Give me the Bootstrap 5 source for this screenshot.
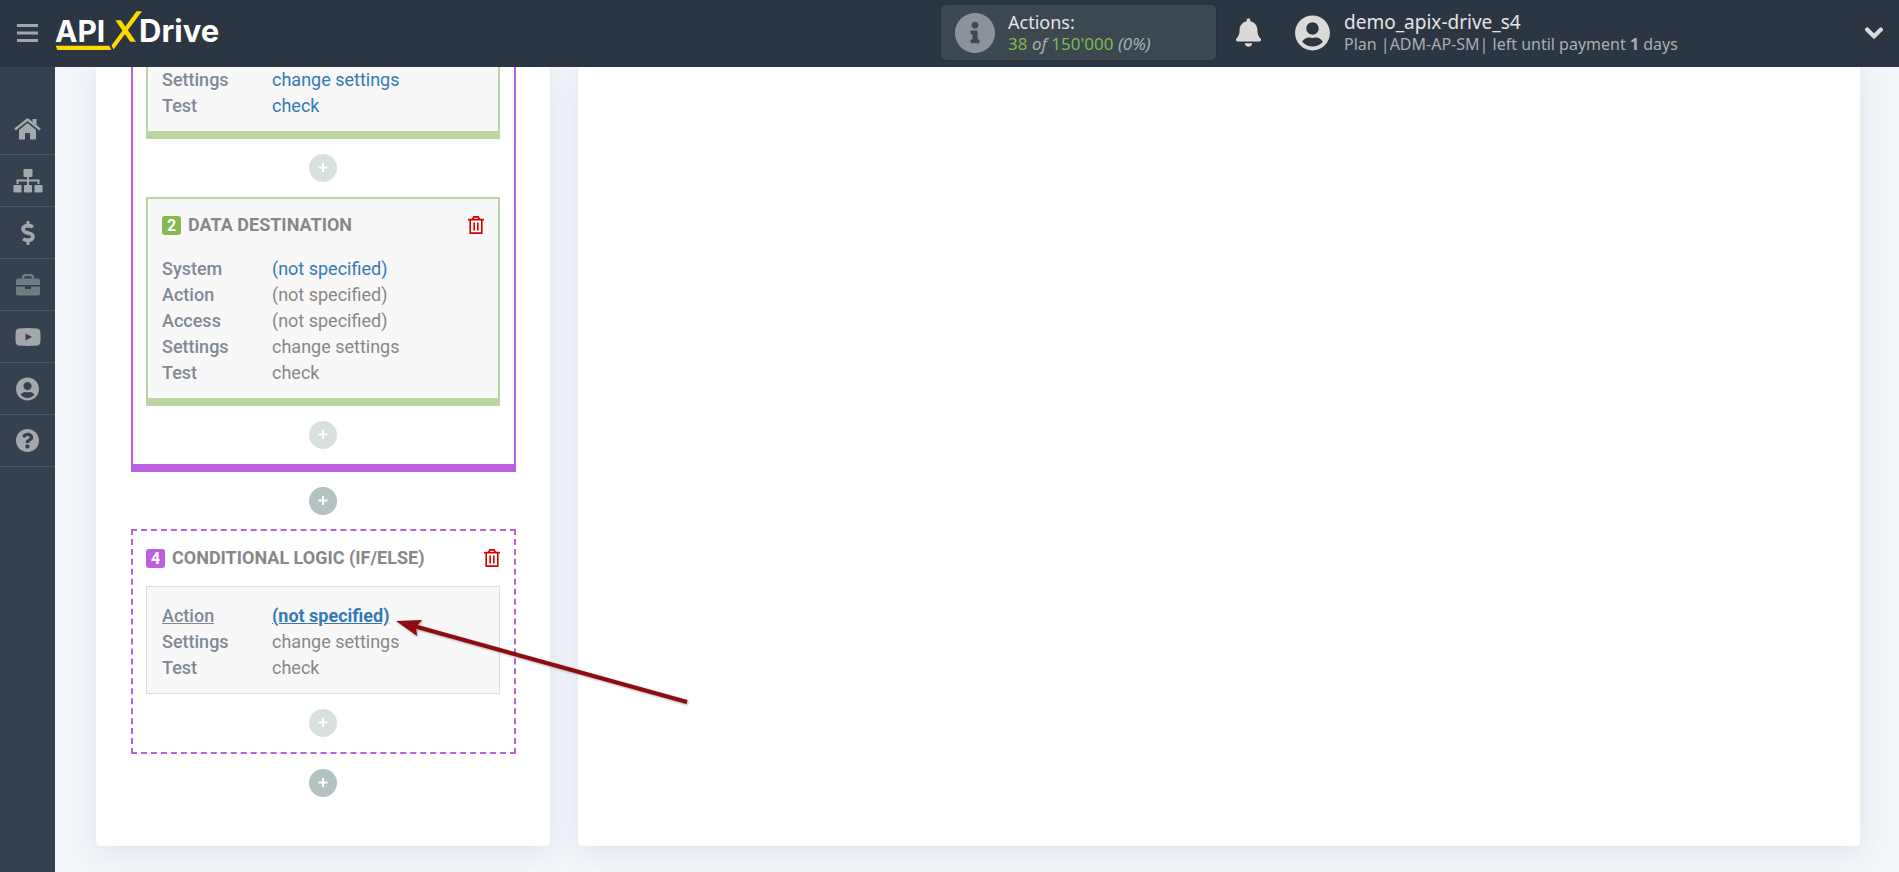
<!DOCTYPE html>
<html lang="en">
<head>
<meta charset="utf-8">
<meta name="viewport" content="width=device-width, initial-scale=1">
<title>ApiX-Drive</title>
<link href="https://cdn.jsdelivr.net/npm/bootstrap@5.3.0/dist/css/bootstrap.min.css" rel="stylesheet">
<style>
  body { background: #f3f7fc; font-family: Roboto, "Liberation Sans", sans-serif; font-size: 18px; line-height: 26px; color: #888; }
  .topbar { background: #2b3642; height: 67px; font-family: "Noto Sans", sans-serif; z-index: 20; color: #a9adb1; padding-bottom: 2px; }
  .topbar button { background: none; border: 0; padding: 0; color: #a0a7ab; }
  .topbar svg { display: block; flex: none; }
  .menu-btn { width: 55px; height: 65px; }
  .menu-btn svg { margin: auto; }
  .actions-box { background: #3b4850; border-radius: 5px; width: 275px; height: 55px; padding-left: 14px; gap: 13px; margin-right: 20px; box-shadow: 0 0 3px rgba(0,0,0,.2); }
  .two-line { line-height: 22px; font-size: 16px; }
  .two-line .head-line { font-size: 19px; color: #e4e4e4; }
  .actions-box .two-line { font-size: 17px; }
  .actions-box .head-line { font-size: 18px; }
  .green-num { color: #7fb84e; }
  .info-icon { color: #8b9299; }
  .light-icon { color: #dadada !important; }
  .user-area { width: 588px; margin-left: 34px; gap: 14px; }
  .side-menu { background: #36414f; width: 55px; flex: none; padding-top: 36px; }
  .side-menu a { height: 52px; color: #a2a8ac; border-bottom: 1px solid #4b5762; display: flex; align-items: center; justify-content: center; }
  .side-menu a.dimmed { color: #717b84; }
  .workspace { display: grid; grid-template-columns: 454fr 1282fr; gap: 28px; padding: 0 39px 26px 41px; }
  .panel { background: #fff; border-radius: 0 0 4px 4px; box-shadow: 0 5px 28px rgba(60,65,80,.11); }
  .flow-panel { padding: 0 34px 49px 35px; position: relative; z-index: 1; }
  .logic-box { border: 2px solid #ba60e0; padding: 0 14px 0 13px; }
  .logic-box.opened { border-top: 0; border-bottom-width: 8px; }
  .logic-box.pending { border-style: dashed; padding-top: 15px; }
  .step-card { background: #f8f8f8; border: 2px solid #bbd6a0; border-bottom-width: 8px; padding: 14px 14px 12px; }
  .step-card.continued { border-top: 0; padding-top: 0; }
  .logic-card { background: #f8f8f8; border: 1px solid #dcdcdc; padding: 16px 15px 12px; margin-top: 16px; }
  .step-title { height: 24px; font-weight: 700; }
  .step-card .step-title { margin-bottom: 19px; }
  .num { width: 19px; height: 19px; border-radius: 3px; color: #fff; font-size: 16px; line-height: 19px; text-align: center; margin-right: 7px; }
  .num.green { background: #86b94f; }
  .num.violet { background: #ba60e0; }
  .step-title button { background: none; border: 0; padding: 0; line-height: 0; color: #d40000; }
  dl.fields { display: grid; grid-template-columns: 110px 1fr; margin: 0; }
  dl.fields dt { font-weight: 500; color: #808996; }
  dl.fields dd { margin: 0; white-space: nowrap; }
  dl.fields a { color: #337ab7; text-decoration: none; }
  dl.fields .current { text-decoration: underline; font-weight: 500; }
  dl.fields a.current { font-weight: 700; }
  .adder { padding: 15px 0; }
  .adder.outer { padding: 15px 1px 14px 0; }
  .adder button { width: 28px; height: 28px; border: 0; padding: 0; border-radius: 50%; background: #b3c3c2; display: flex; align-items: center; justify-content: center; }
  .adder.faded button { opacity: .5; }
  .pointer { position: absolute; left: 120px; top: -5px; overflow: visible; pointer-events: none; filter: drop-shadow(1px 1px 1px rgba(0,0,0,.35)); }
</style>
</head>
<body>
<svg class="d-none">
  <symbol id="user" viewBox="0 0 496 512"><path fill="currentColor" d="M248 8C111 8 0 119 0 256s111 248 248 248 248-111 248-248S385 8 248 8zm0 96c48.600 0 88 39.400 88 88s-39.400 88-88 88-88-39.400-88-88 39.400-88 88-88zm0 344c-58.700 0-111.300-26.600-146.500-68.200 18.800-35.400 55.600-59.800 98.500-59.800 2.400 0 4.800.4 7.100 1.100 13 4.200 26.600 6.900 40.900 6.900 14.300 0 28-2.700 40.900-6.900 2.300-.7 4.700-1.100 7.100-1.100 42.900 0 79.700 24.400 98.500 59.800C359.300 421.400 306.700 448 248 448z"/></symbol>
  <symbol id="trash" viewBox="0 0 16 18"><path fill="none" stroke="currentColor" stroke-width="1.6" d="M0 3.600H16M4.500 3.300L5.800 .9H10.200L11.500 3.300M2.200 4V17.100H13.800V4M6.200 6.500V14.500M9.800 6.500V14.500"/></symbol>
  <symbol id="plus" viewBox="0 0 10 10"><path stroke="#fff" stroke-width="2" d="M5 0V9M.5 4.500H9.500"/></symbol>
</svg>

<header class="topbar sticky-top d-flex align-items-center">
  <button class="menu-btn" aria-label="Menu"><svg width="21" height="18" viewBox="0 0 21 18"><path stroke="currentColor" stroke-width="3" d="M0 1.500H21M0 9H21M0 16.500H21"/></svg></button>
  <a href="#" class="d-block" aria-label="APIXDrive"><svg width="175" height="49" viewBox="0 0 175 49" font-family="Inter, sans-serif" font-weight="700" font-size="30" fill="#fff">
    <text x="0" y="34">API</text><text x="84" y="34" font-size="31">Drive</text>
    <path fill="#ffd800" d="M.7 37.700H54.300L56.300 42H2.300Z"/>
    <path fill="#ffd800" d="M60.300 12.300H66L81 33.700H75.300Z"/><path fill="#ffd800" d="M81.500 3.300H87L58.500 41.500L56.500 37.500Z"/></svg></a>
  <div class="actions-box d-flex align-items-center ms-auto">
    <svg class="info-icon" width="40" height="40" viewBox="8 8 496 496"><path fill="currentColor" d="M256 8C119.043 8 8 119.083 8 256c0 136.997 111.043 248 248 248s248-111.003 248-248C504 119.083 392.957 8 256 8zm0 110c23.196 0 42 18.804 42 42s-18.804 42-42 42-42-18.804-42-42 18.804-42 42-42zm56 254c0 6.627-5.373 12-12 12h-88c-6.627 0-12-5.373-12-12v-24c0-6.627 5.373-12 12-12h12v-64h-12c-6.627 0-12-5.373-12-12v-24c0-6.627 5.373-12 12-12h64c6.627 0 12 5.373 12 12v100h12c6.627 0 12 5.373 12 12v24z"/></svg>
    <div class="two-line"><div class="head-line">Actions:</div><span class="green-num">38</span> <i>of</i> <span class="green-num">150'000</span> <i>(0%)</i></div>
  </div>
  <button class="light-icon" aria-label="Notifications"><svg width="25" height="29" viewBox="0 0 448 512"><path fill="currentColor" d="M224 512c35.320 0 63.970-28.650 63.970-64H160.030c0 35.350 28.650 64 63.970 64zm215.390-149.710c-19.320-20.760-55.470-51.990-55.470-154.290 0-77.700-54.480-139.900-127.940-155.160V32c0-17.670-14.320-32-31.980-32s-31.980 14.330-31.980 32v20.840C118.560 68.100 64.080 130.300 64.080 208c0 102.300-36.150 133.530-55.470 154.290-6 6.450-8.660 14.160-8.610 21.710.11 16.400 12.980 32 32.100 32h383.800c19.120 0 32-15.600 32.100-32 .05-7.550-2.610-15.270-8.610-21.710z"/></svg></button>
  <div class="user-area d-flex align-items-center">
    <svg class="light-icon" width="35" height="36"><use href="#user"/></svg>
    <div class="two-line"><div class="head-line">demo_apix-drive_s4</div>Plan |ADM-AP-SM| left until payment <b>1</b> days</div>
    <button class="light-icon ms-auto" aria-label="Open account menu"><svg width="18" height="20" viewBox="0 0 448 512"><path fill="currentColor" stroke="currentColor" stroke-width="26" stroke-linejoin="round" d="M207.029 381.476L12.686 187.132c-9.373-9.373-9.373-24.569 0-33.941l22.667-22.667c9.357-9.357 24.522-9.375 33.901-.04L224 284.505l154.745-154.021c9.379-9.335 24.544-9.317 33.901.04l22.667 22.667c9.373 9.373 9.373 24.569 0 33.941L240.971 381.476c-9.373 9.372-24.569 9.372-33.942 0z"/></svg></button>
  </div>
  <div class="pe-3"></div>
</header>

<div class="d-flex">
  <nav class="side-menu" aria-label="Main">
    <a href="#" aria-label="Home"><svg width="27" height="22" viewBox="0 0 27 22" fill="currentColor"><path d="M13.500 5L22 12V20.500Q22 21.500 21 21.500H16V15H11V21.500H6Q5 21.500 5 20.500V12Z"/><path fill="none" stroke="currentColor" stroke-width="2.400" stroke-linejoin="round" d="M1 11.500L13.500 1.500L26 11.500"/><path d="M18.500 1H22.500V8L18.500 5Z"/></svg></a>
    <a href="#" aria-label="Connections"><svg width="30" height="24" viewBox="0 0 30 24" fill="currentColor"><rect x="10.500" width="9" height="8" rx="1.300"/><rect y="16" x=".5" width="8" height="7.500" rx="1.300"/><rect y="16" x="11" width="8" height="7.500" rx="1.300"/><rect y="16" x="21.500" width="8" height="7.500" rx="1.300"/><path fill="none" stroke="currentColor" stroke-width="2" d="M15 7V17M4.500 15V11.500H25.500V15"/></svg></a>
    <a href="#" aria-label="Payments"><svg width="14" height="24" viewBox="0 0 288 512"><path fill="currentColor" d="M209.200 233.400l-108-31.600C88.700 198.200 80 186.500 80 173.500c0-16.300 13.200-29.500 29.500-29.500h66.300c12.200 0 24.200 3.700 34.200 10.500 6.100 4.100 14.300 3.100 19.500-2l34.800-34c7.100-6.900 6.100-18.400-1.800-24.500C238 74.800 207.400 64.100 176 64V16c0-8.800-7.200-16-16-16h-32c-8.800 0-16 7.200-16 16v48h-2.500C45.800 64-5.400 118.700.5 183.600c4.200 46.100 39.400 83.600 83.800 96.600l102.500 30c12.500 3.700 21.200 15.300 21.200 28.300 0 16.300-13.200 29.500-29.500 29.500h-66.300C100 368 88 364.300 78 357.500c-6.100-4.100-14.300-3.100-19.500 2l-34.800 34c-7.100 6.900-6.100 18.400 1.800 24.500 24.500 19.200 55.100 29.900 86.500 30v48c0 8.800 7.200 16 16 16h32c8.800 0 16-7.200 16-16v-48.200c46.600-.9 90.300-28.600 105.700-72.700 21.500-61.600-14.600-124.800-72.500-141.700z"/></svg></a>
    <a href="#" class="dimmed" aria-label="Business"><svg width="24" height="22" viewBox="0 0 24 22" fill="currentColor"><path d="M0 11V6.500Q0 4.500 2 4.500H22Q24 4.500 24 6.500V11Z"/><path fill="none" stroke="currentColor" stroke-width="2.200" d="M7 5V3L8.500 1.200H15.500L17 3V5"/><path d="M0 12.500H9V15H15V12.500H24V19.500Q24 21.500 22 21.500H2Q0 21.500 0 19.500Z"/></svg></a>
    <a href="#" aria-label="Video"><svg width="26" height="18" viewBox="0 0 26 18"><path fill="currentColor" fill-rule="evenodd" d="M4 .5Q13-.5 22 .5Q25 .7 25.300 4Q25.800 9 25.300 14Q25 17.300 22 17.500Q13 18.300 4 17.500Q1 17.300 .7 14Q.2 9 .7 4Q1 .7 4 .5ZM10.500 5.500V12.500L17 9Z"/></svg></a>
    <a href="#" aria-label="Profile"><svg width="23" height="24"><use href="#user"/></svg></a>
    <a href="#" aria-label="Help"><svg width="23" height="23" viewBox="8 8 496 496"><path fill="currentColor" d="M504 256c0 136.997-111.043 248-248 248S8 392.997 8 256C8 119.083 119.043 8 256 8s248 111.083 248 248zM262.655 90c-54.497 0-89.255 22.957-116.549 63.758-3.536 5.286-2.353 12.415 2.715 16.258l34.699 26.310c5.205 3.947 12.621 3.008 16.665-2.122 17.864-22.658 30.113-35.797 57.303-35.797 20.429 0 45.698 13.148 45.698 32.958 0 14.976-12.363 22.667-32.534 33.976C247.128 238.528 216 254.941 216 296v4c0 6.627 5.373 12 12 12h56c6.627 0 12-5.373 12-12v-1.333c0-28.462 83.186-29.647 83.186-106.667 0-58.002-60.165-102-116.531-102zM256 338c-25.365 0-46 20.635-46 46 0 25.364 20.635 46 46 46s46-20.636 46-46c0-25.365-20.635-46-46-46z"/></svg></a>
  </nav>

  <main class="workspace flex-grow-1">
    <section class="panel flow-panel">
      <div class="logic-box opened">
        <div class="step-card continued">
          <dl class="fields">
            <dt>Settings</dt><dd><a href="#">change settings</a></dd>
            <dt>Test</dt><dd><a href="#">check</a></dd>
          </dl>
        </div>
        <div class="adder faded d-flex justify-content-center"><button aria-label="Add step"><svg width="10" height="10"><use href="#plus"/></svg></button></div>
        <div class="step-card">
          <div class="step-title d-flex align-items-center"><span class="num green">2</span>DATA DESTINATION<button class="ms-auto" aria-label="Delete"><svg width="16" height="18"><use href="#trash"/></svg></button></div>
          <dl class="fields">
            <dt>System</dt><dd><a href="#">(not specified)</a></dd>
            <dt>Action</dt><dd>(not specified)</dd>
            <dt>Access</dt><dd>(not specified)</dd>
            <dt>Settings</dt><dd>change settings</dd>
            <dt>Test</dt><dd>check</dd>
          </dl>
        </div>
        <div class="adder faded d-flex justify-content-center"><button aria-label="Add step"><svg width="10" height="10"><use href="#plus"/></svg></button></div>
      </div>
      <div class="adder outer d-flex justify-content-center"><button aria-label="Add block"><svg width="10" height="10"><use href="#plus"/></svg></button></div>
      <div class="logic-box pending">
        <div class="step-title d-flex align-items-center"><span class="num violet">4</span>CONDITIONAL LOGIC (IF/ELSE)<button class="ms-auto" aria-label="Delete"><svg width="16" height="18"><use href="#trash"/></svg></button></div>
        <div class="logic-card">
          <dl class="fields">
            <dt><span class="current">Action</span></dt>
            <dd class="position-relative"><a href="#" class="current">(not specified)</a>
              <svg class="pointer" width="300" height="110" viewBox="0 0 300 110"><path stroke="#8e0b10" stroke-width="4" d="M20 27.500L295 104"/><path fill="#8e0b10" d="M4 23L30 22L24 29L25 38Z"/></svg></dd>
            <dt>Settings</dt><dd>change settings</dd>
            <dt>Test</dt><dd>check</dd>
          </dl>
        </div>
        <div class="adder faded d-flex justify-content-center"><button aria-label="Add step"><svg width="10" height="10"><use href="#plus"/></svg></button></div>
      </div>
      <div class="adder outer pb-0 d-flex justify-content-center"><button aria-label="Add block"><svg width="10" height="10"><use href="#plus"/></svg></button></div>
    </section>
    <section class="panel" aria-label="Details"></section>
  </main>
</div>
<script src="https://cdn.jsdelivr.net/npm/bootstrap@5.3.0/dist/js/bootstrap.bundle.min.js"></script>
</body>
</html>
